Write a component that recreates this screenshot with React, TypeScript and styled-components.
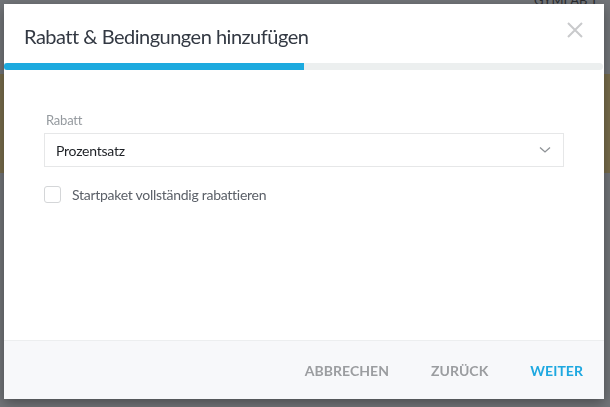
import * as React from "react"
import styled, { createGlobalStyle } from "styled-components"

const Global = createGlobalStyle`
  html, body {
    margin: 0;
    padding: 0;
    width: 610px;
    height: 407px;
    overflow: hidden;
    background: #727579;
    font-family: "Lato", "Open Sans", sans-serif;
  }
`

// page lying behind the dialog, dimmed
const Page = styled.div`
  display: flex;
  flex-direction: column;
  height: 407px;
  background: #727579;
`

const PageTop = styled.div`
  height: 74px;
  display: flex;
  justify-content: flex-end;
  color: #2c2e31;
  font-size: 13px;
  line-height: 8px;
  padding-right: 12px;
  overflow: hidden;
  > span { margin-top: -4px; }
`

const Banner = styled.div`
  height: 99px;
  background: #786d4c;
`

const PageRest = styled.div`
  flex: 1;
`

const Overlay = styled.div`
  position: fixed;
  inset: 0;
`

const Modal = styled.div`
  position: absolute;
  left: 4px;
  top: 4px;
  width: 600px;
  height: 395px;
  background: #fff;
  display: flex;
  flex-direction: column;
  box-shadow: 0 4px 12px rgba(0, 0, 0, 0.35);
`

const Header = styled.header`
  height: 59px;
  display: flex;
  align-items: center;
  justify-content: space-between;
  padding: 0 20px 0 20px;
`

const Title = styled.h1`
  margin: 5px 0 0;
  font-size: 20px;
  font-weight: 400;
  color: #333943;
  letter-spacing: -0.5px;
`

const Close = styled.button`
  border: 0;
  background: none;
  padding: 0;
  width: 18px;
  height: 18px;
  margin-top: -8px;
  cursor: pointer;
  display: flex;
`

const Progress = styled.div`
  height: 7px;
  background: #ecefef;
  border-radius: 0 4px 4px 0;
  margin-right: 1px;
`

interface FillProps {
  $value: number
}
const Fill = styled.div<FillProps>`
  height: 100%;
  width: ${(p) => p.$value}%;
  background: #1caadf;
  border-radius: 3px 0 0 3px;
`

const Body = styled.div`
  flex: 1;
  padding: 42px 40px 0 40px;
`

const Label = styled.label`
  display: block;
  font-size: 13px;
  color: #959a9f;
  margin: 0 0 5px 2px;
  letter-spacing: -0.2px;
`

const Select = styled.div`
  height: 32px;
  border: 1px solid #e6e7e8;
  display: flex;
  align-items: center;
  justify-content: space-between;
  padding: 0 12px 0 11px;
  font-size: 14px;
  color: #1e2126;
  letter-spacing: -0.25px;
`

const CheckRow = styled.label`
  display: flex;
  align-items: center;
  gap: 11px;
  margin-top: 19px;
  font-size: 14px;
  color: #5b6068;
  letter-spacing: -0.27px;
`

const Box = styled.span`
  width: 15px;
  height: 15px;
  border: 1px solid #d4d6d8;
  border-radius: 3px;
  background: #fff;
`

const Footer = styled.footer`
  height: 58px;
  border-top: 1px solid #eceeef;
  background: #f7f8fa;
  display: flex;
  align-items: center;
  justify-content: flex-end;
  gap: 42px;
  padding-right: 21px;
`

interface ActionProps {
  $primary?: boolean
}
const Action = styled.button<ActionProps>`
  border: 0;
  background: none;
  padding: 0;
  font-family: inherit;
  font-size: 14px;
  font-weight: 700;
  letter-spacing: 0.05px;
  text-transform: uppercase;
  color: ${(p) => (p.$primary ? "#1ea8e0" : "#9b9da0")};
  cursor: pointer;
`

const App: React.FunctionComponent = () => {
  return (
    <>
      <Global />
      <Page>
        <PageTop>
          <span>GYMLAB T</span>
        </PageTop>
        <Banner />
        <PageRest />
      </Page>
      <Overlay>
        <Modal>
          <Header>
            <Title>Rabatt &amp; Bedingungen hinzufügen</Title>
            <Close aria-label="Schließen">
              <svg width="18" height="18" viewBox="0 0 18 18">
                <path d="M2 2 L16 16 M16 2 L2 16" stroke="#c9cacc" strokeWidth="2" />
              </svg>
            </Close>
          </Header>
          <Progress>
            <Fill $value={50} />
          </Progress>
          <Body>
            <Label>Rabatt</Label>
            <Select>
              <span>Prozentsatz</span>
              <svg width="12" height="8" viewBox="0 0 12 8">
                <path d="M1 1.5 L6 6 L11 1.5" fill="none" stroke="#8e9296" strokeWidth="1.3" />
              </svg>
            </Select>
            <CheckRow>
              <Box />
              Startpaket vollständig rabattieren
            </CheckRow>
          </Body>
          <Footer>
            <Action>Abbrechen</Action>
            <Action>Zurück</Action>
            <Action $primary>Weiter</Action>
          </Footer>
        </Modal>
      </Overlay>
    </>
  )
}

export default App
